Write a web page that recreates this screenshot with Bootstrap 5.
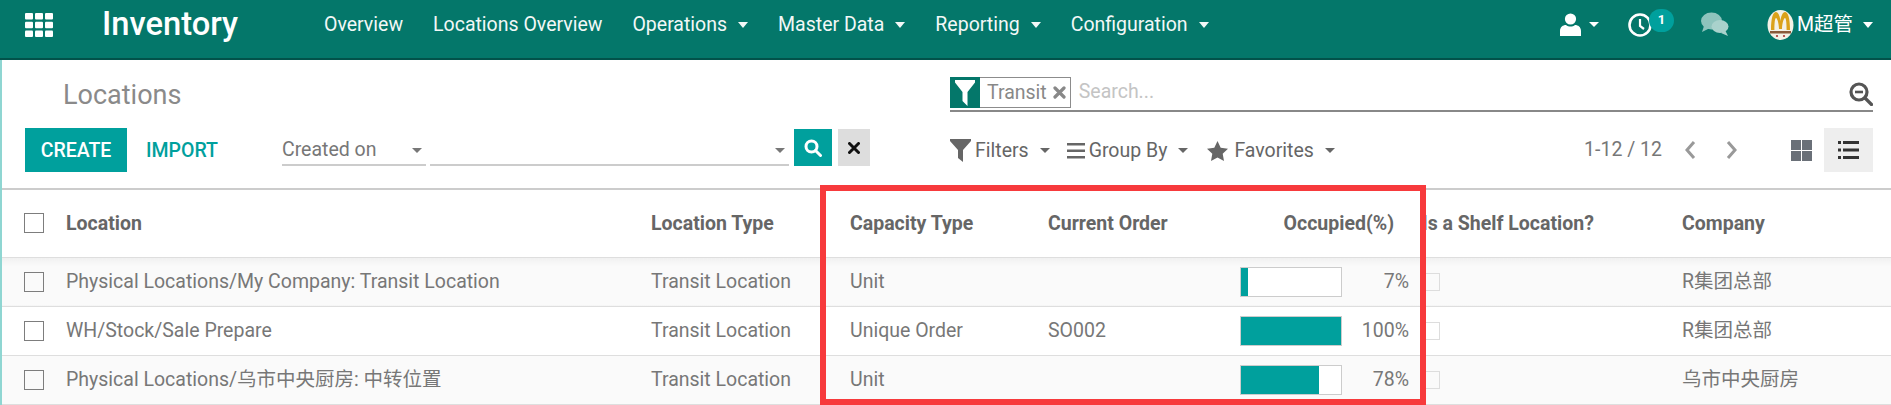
<!DOCTYPE html>
<html lang="en">
<head>
    <meta charset="UTF-8">
    <meta name="viewport" content="width=device-width, initial-scale=1.0">
    <title>Locations - Inventory</title>
    <link href="https://cdn.jsdelivr.net/npm/bootstrap@5.3.3/dist/css/bootstrap.min.css" rel="stylesheet">
    <style>
        html, body { height: 405px; overflow: hidden; }
        body { font-family: Roboto, "Noto Sans CJK SC", sans-serif; font-size: 19.5px; color: #777; background: #fff; }

        /* top bar */
        .top-bar { height: 60px; padding: 0 0 9px; background: #04776a; border-bottom: 2px solid #02524a; }
        .top-bar .navbar-nav .nav-link { color: #fff; padding: 0 15px; font-size: 19.5px; line-height: 49px; opacity: .95; }
        .top-bar .dropdown-toggle::after { margin-left: 11px; vertical-align: 3px; border-top-width: 6px; border-left-width: 5.5px; border-right-width: 5.5px; }
        .apps-btn { width: 102px; padding-left: 25px; }
        .app-title { color: #fff; font-size: 32.7px; font-weight: 500; width: 207px; line-height: 49px; }
        .systray { padding-right: 18px; }
        .tray-user { width: 70px; }
        .tray-clock { width: 74px; position: relative; margin-left: -2px; }
        .tray-chat { width: 66px; margin-left: -1px; }
        .tray-badge { position: absolute; left: 21px; top: -3px; width: 25px; height: 23px; border-radius: 12px; background: #00a09d; color: #fff; font-size: 13px; font-weight: 700; text-align: center; line-height: 21px; }
        .tray-name { color: #fff; font-size: 19.5px; margin-left: 3px; }

        /* control panel */
        .page-wrap { position: relative; border-left: 2px solid #8fd6d2; height: 345px; }
        .ctrl-panel { padding: 17px 18px 16px 23px; border-bottom: 2px solid #ccc; }
        .ctrl-left { flex: 0 0 925px; }
        .page-name { height: 35px; padding-left: 38px; font-size: 27px; line-height: 36px; color: #8a8a8a; }
        .ctrl-row { height: 44px; margin-top: 16px; }
        .btn-create { background: #00a09d; color: #fff; border-radius: 0; border: 0; width: 102px; height: 44px; padding: 2px 0 0; font-size: 19.5px; font-weight: 500; }
        .btn-create:hover { background: #00a09d; color: #fff; }
        .btn-import { background: none; border: 0; border-radius: 0; color: #00a09d; padding: 2px 0 0; margin-left: 19px; width: 71px; font-size: 19.5px; font-weight: 500; }
        .date-pick { height: 37px; border-bottom: 2px solid #ccc; font-size: 19.5px; padding-top: 7px; color: #777; margin-top: 1px; }
        .date-a { width: 144px; margin-left: 65px; }
        .date-b { width: 359px; margin-left: 4px; }
        .tri { width: 0; height: 0; border-top: 5px solid #777; border-left: 5px solid transparent; border-right: 5px solid transparent; }
        .btn-find { width: 38px; height: 37px; margin-left: 5px; margin-top: 1px; background: #00a09d; }
        .btn-wipe { width: 32px; height: 37px; margin-left: 6px; margin-top: 1px; background: #ddd; }
        .search-box { height: 35px; border-bottom: 2px solid #888; }
        .facet { height: 31px; border: 1px solid #8c8c8c; display: flex; align-items: stretch; }
        .facet-icon { width: 30px; background: #04776a; margin: -1px 0 -1px -1px; }
        .facet-text { padding: 0 4px 0 7px; font-size: 19.5px; line-height: 29px; color: #888; }
        .search-hint { margin-left: 8px; color: #c4c4c4; font-size: 19.5px; line-height: 30px; }
        .tool-item { color: #666; font-size: 19.5px; padding-top: 1px; }
        .tool-item .tri { margin-left: 11px; border-top-color: #666; }
        .pager-text { color: #777; }
        .view-active { width: 49px; height: 44px; background: #eee; }
        .view-kanban { width: 33px; }

        /* list */
        .loc-table { table-layout: fixed; width: 1889px; margin: 0; color: #777; font-size: 19.5px; }
        .loc-table th, .loc-table td { padding: 0 15px; vertical-align: middle; white-space: nowrap; border-bottom: 1px solid #dedede; box-shadow: none; }
        .loc-table th { height: 67px; color: #666; font-size: 19.5px; font-weight: 700; }
        .loc-table td { height: 49px; }
        .loc-table tbody tr:nth-child(odd) td { background: #fafafa; }
        .loc-table tbody tr:first-child td { background: linear-gradient(#f0f0f0, #fafafa 9px); }
        .sel-cell { padding-left: 22px !important; padding-right: 0 !important; }
        .tick { display: block; width: 20px; height: 20px; border: 1px solid #7d7d7d; margin: 0; }
        .tick-pale { width: 18px; height: 18px; border-color: #ddd; }
        .th-occ { padding-right: 18px !important; }
        .td-occ { padding-right: 3px !important; }
        .th-shelf { padding-left: 10px !important; }
        .td-shelf { padding-left: 10px !important; }
        .cap-bar { width: 102px; height: 30px; border: 1px solid #ccc; border-radius: 0; background: #fff; }
        .cap-bar .progress-bar { background: #00a09d; }
        .cap-pct { flex: 1; text-align: right; }

        /* annotation drawn over the screenshot */
        .red-frame { position: absolute; left: 818px; top: 125px; width: 606px; height: 220px; border: 6.5px solid #f73a3c; pointer-events: none; }
    </style>
</head>
<body>
    <nav class="navbar navbar-expand top-bar">
        <a class="apps-btn d-block" href="#">
            <svg width="28" height="24" viewBox="0 0 28 24" fill="#fff" class="d-block">
                <rect x="0" y="0" width="8" height="6.6" rx="1"/><rect x="10" y="0" width="8" height="6.6" rx="1"/><rect x="20" y="0" width="8" height="6.6" rx="1"/>
                <rect x="0" y="8.7" width="8" height="6.6" rx="1"/><rect x="10" y="8.7" width="8" height="6.6" rx="1"/><rect x="20" y="8.7" width="8" height="6.6" rx="1"/>
                <rect x="0" y="17.4" width="8" height="6.6" rx="1"/><rect x="10" y="17.4" width="8" height="6.6" rx="1"/><rect x="20" y="17.4" width="8" height="6.6" rx="1"/>
            </svg>
        </a>
        <span class="app-title">Inventory</span>
        <ul class="navbar-nav">
            <li class="nav-item"><a class="nav-link" href="#">Overview</a></li>
            <li class="nav-item"><a class="nav-link" href="#">Locations Overview</a></li>
            <li class="nav-item"><a class="nav-link dropdown-toggle" href="#">Operations</a></li>
            <li class="nav-item"><a class="nav-link dropdown-toggle" href="#">Master Data</a></li>
            <li class="nav-item"><a class="nav-link dropdown-toggle" href="#">Reporting</a></li>
            <li class="nav-item"><a class="nav-link dropdown-toggle" href="#">Configuration</a></li>
        </ul>
        <div class="ms-auto d-flex align-items-center systray">
            <div class="tray-user d-flex align-items-center">
                <svg width="21" height="23" viewBox="0 0 21 23" fill="#fff"><circle cx="10.5" cy="6" r="5.6"/><path d="M0 23v-5c0-4 3-6 6-6 1.300 1 2.800 1.500 4.500 1.500s3.200-.5 4.500-1.500c3 0 6 2 6 6v5z"/></svg>
                <span class="tri ms-2" style="border-top-color:#fff"></span>
            </div>
            <div class="tray-clock">
                <svg width="24" height="26" viewBox="0 0 24 26" fill="none" stroke="#fff" stroke-width="2.6" class="d-block"><circle cx="12" cy="13" r="10.500"/><path d="M12 7v7l4 3" stroke-width="2.200"/></svg>
                <span class="tray-badge">1</span>
            </div>
            <div class="tray-chat">
                <svg width="28" height="25" viewBox="0 0 28 25" fill="#8ec4bd" class="d-block"><ellipse cx="10.500" cy="9" rx="10.500" ry="8.500"/><path d="M3 14l-2 6 7-3.500z"/><ellipse cx="19" cy="14.500" rx="8.500" ry="6.500" fill="#a9d2cc"/><path d="M24 18l3 6-7-3z" fill="#a9d2cc"/></svg>
            </div>
            <div class="d-flex align-items-center">
                <svg width="27" height="30" viewBox="0 0 27 30" class="d-block">
                    <ellipse cx="13.500" cy="15" rx="13" ry="15" fill="#f4f1e6"/>
                    <path d="M4 20C4 8 6 2 9 2c2.300 0 4 4 4.500 9 .5-5 2.200-9 4.500-9 3 0 5 6 5 18h-3.400c0-7-.5-12-1.600-12-1.300 0-2.800 5-3 11h-3c-.2-6-1.700-11-3-11-1.100 0-1.600 5-1.600 12z" fill="#dba21a"/>
                    <rect x="3" y="21" width="21" height="2.500" fill="#8a5a3a"/>
                    <circle cx="10" cy="26" r="1.100" fill="#a33"/><circle cx="17" cy="26" r="1.100" fill="#a33"/>
                </svg>
                <span class="tray-name">M超管</span>
                <span class="tri" style="margin-left:10px;border-top-color:#fff;border-top-width:6px;border-left-width:5.500px;border-right-width:5.500px"></span>
            </div>
        </div>
    </nav>

    <div class="page-wrap">
        <div class="ctrl-panel d-flex">
            <div class="ctrl-left">
                <div class="page-name">Locations</div>
                <div class="ctrl-row d-flex align-items-start">
                    <button class="btn btn-create" type="button">CREATE</button>
                    <button class="btn btn-import h-100" type="button">IMPORT</button>
                    <div class="date-pick date-a d-flex justify-content-between align-items-center pe-1">Created on<span class="tri"></span></div>
                    <div class="date-pick date-b d-flex justify-content-end align-items-center pe-1"><span class="tri"></span></div>
                    <div class="btn-find d-flex align-items-center justify-content-center">
                        <svg width="18" height="18" viewBox="0 0 18 18" fill="none" stroke="#fff" stroke-width="3"><circle cx="7.500" cy="7.500" r="5.500"/><path d="M11.500 11.500l5 5" stroke-linecap="round"/></svg>
                    </div>
                    <div class="btn-wipe d-flex align-items-center justify-content-center">
                        <svg width="12" height="12" viewBox="0 0 12 12" stroke="#111" stroke-width="3" stroke-linecap="round"><path d="M1.500 1.500l9 9M10.500 1.500l-9 9"/></svg>
                    </div>
                </div>
            </div>
            <div class="flex-grow-1">
                <div class="search-box d-flex align-items-start">
                    <div class="facet">
                        <div class="facet-icon d-flex align-items-center justify-content-center">
                            <svg width="20" height="26" viewBox="0 0 20 26" fill="#fff"><path d="M0 0h20v2.500L12.500 12v14l-5-5V12L0 2.500z"/></svg>
                        </div>
                        <span class="facet-text d-flex align-items-center">Transit
                            <svg style="margin-left:6px" width="13" height="13" viewBox="0 0 13 13" stroke="#888" stroke-width="3.200" stroke-linecap="round"><path d="M2 2l9 9M11 2l-9 9"/></svg>
                        </span>
                    </div>
                    <span class="search-hint">Search...</span>
                    <svg class="ms-auto" style="margin-top:5px" width="24" height="24" viewBox="0 0 24 24" fill="none" stroke="#555" stroke-width="3.200"><circle cx="10" cy="10" r="8"/><path d="M16 16l6.500 6.500" stroke-linecap="round"/><path d="M6 10h8" stroke-width="2.600"/></svg>
                </div>
                <div class="ctrl-row d-flex align-items-center">
                    <div class="tool-item d-flex align-items-center">
                        <svg class="me-1" width="21" height="23" viewBox="0 0 21 23" fill="#666"><path d="M0 0h21v2L13 11v12l-5-4v-8L0 2z"/></svg>Filters<span class="tri"></span>
                    </div>
                    <div class="tool-item d-flex align-items-center" style="margin-left:17px">
                        <svg class="me-1" width="18" height="16" viewBox="0 0 18 16" fill="#666"><rect width="18" height="2.500"/><rect y="6.500" width="18" height="2.500"/><rect y="13" width="18" height="2.500"/></svg>Group By<span class="tri"></span>
                    </div>
                    <div class="tool-item d-flex align-items-center" style="margin-left:19px">
                        <svg style="margin-right:6px" width="21" height="20" viewBox="0 0 21 20" fill="#666"><path d="M10.500 0l3.200 6.700 7.300 1-5.300 5.100 1.300 7.200-6.500-3.500L4 20l1.300-7.200L0 7.700l7.300-1z"/></svg>Favorites<span class="tri"></span>
                    </div>
                    <div class="ms-auto d-flex align-items-center">
                        <span class="pager-text">1-12 / 12</span>
                        <svg style="margin-left:22px" width="12" height="20" viewBox="0 0 12 20" fill="none" stroke="#999" stroke-width="3"><path d="M10 2L3 10l7 8"/></svg>
                        <svg style="margin-left:30px" width="12" height="20" viewBox="0 0 12 20" fill="none" stroke="#999" stroke-width="3"><path d="M2 2l7 8-7 8"/></svg>
                        <div class="view-kanban" style="margin-left:53px">
                            <svg width="21" height="21" viewBox="0 0 21 21" fill="#6a7078" class="d-block"><rect width="10" height="10"/><rect x="11" width="10" height="10"/><rect y="11" width="10" height="10"/><rect x="11" y="11" width="10" height="10"/></svg>
                        </div>
                        <div class="view-active d-flex align-items-center justify-content-center">
                            <svg width="21" height="18" viewBox="0 0 21 18" fill="#333"><rect width="3" height="3"/><rect x="5" width="16" height="3"/><rect y="7.500" width="3" height="3"/><rect x="5" y="7.500" width="16" height="3"/><rect y="15" width="3" height="3"/><rect x="5" y="15" width="16" height="3"/></svg>
                        </div>
                    </div>
                </div>
            </div>
        </div>

        <table class="table loc-table">
            <colgroup>
                <col style="width:49px"><col style="width:585px"><col style="width:199px"><col style="width:198px"><col style="width:192px"><col style="width:187px"><col style="width:255px"><col>
            </colgroup>
            <thead>
                <tr>
                    <th class="sel-cell"><span class="tick"></span></th>
                    <th>Location</th>
                    <th>Location Type</th>
                    <th>Capacity Type</th>
                    <th>Current Order</th>
                    <th class="text-end th-occ">Occupied(%)</th>
                    <th class="th-shelf">Is a Shelf Location?</th>
                    <th>Company</th>
                </tr>
            </thead>
            <tbody>
                <tr>
                    <td class="sel-cell"><span class="tick"></span></td>
                    <td>Physical Locations/My Company: Transit Location</td>
                    <td>Transit Location</td>
                    <td>Unit</td>
                    <td></td>
                    <td class="td-occ"><div class="d-flex align-items-center"><div class="progress cap-bar"><div class="progress-bar" style="width:7%"></div></div><span class="cap-pct">7%</span></div></td>
                    <td class="td-shelf"><span class="tick tick-pale"></span></td>
                    <td>R集团总部</td>
                </tr>
                <tr>
                    <td class="sel-cell"><span class="tick"></span></td>
                    <td>WH/Stock/Sale Prepare</td>
                    <td>Transit Location</td>
                    <td>Unique Order</td>
                    <td>SO002</td>
                    <td class="td-occ"><div class="d-flex align-items-center"><div class="progress cap-bar"><div class="progress-bar" style="width:100%"></div></div><span class="cap-pct">100%</span></div></td>
                    <td class="td-shelf"><span class="tick tick-pale"></span></td>
                    <td>R集团总部</td>
                </tr>
                <tr>
                    <td class="sel-cell"><span class="tick"></span></td>
                    <td>Physical Locations/乌市中央厨房: 中转位置</td>
                    <td>Transit Location</td>
                    <td>Unit</td>
                    <td></td>
                    <td class="td-occ"><div class="d-flex align-items-center"><div class="progress cap-bar"><div class="progress-bar" style="width:78%"></div></div><span class="cap-pct">78%</span></div></td>
                    <td class="td-shelf"><span class="tick tick-pale"></span></td>
                    <td>乌市中央厨房</td>
                </tr>
            </tbody>
        </table>
        <div class="red-frame"></div>
    </div>
    <script src="https://cdn.jsdelivr.net/npm/bootstrap@5.3.3/dist/js/bootstrap.bundle.min.js"></script>
</body>
</html>
